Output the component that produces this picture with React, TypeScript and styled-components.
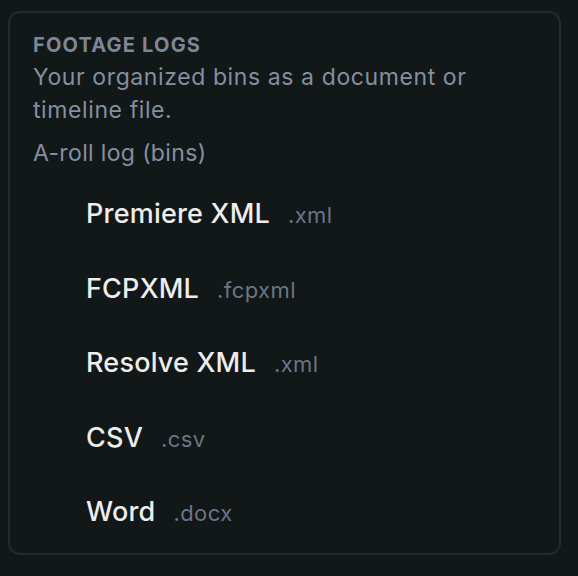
import React from "react";
import styled, { createGlobalStyle } from "styled-components";

const Global = createGlobalStyle`
  html, body { margin: 0; padding: 0; background: #121718; }
  body { font-family: Inter, "Noto Sans", sans-serif; -webkit-font-smoothing: antialiased; }
`;

const Page = styled.div`
  padding: 11px 17px 0 8px;
  width: 578px;
  height: 576px;
  box-sizing: border-box;
`;

const Card = styled.section`
  box-sizing: border-box;
  width: 553px;
  height: 544px;
  border: 2px solid #252a2c;
  border-radius: 12px;
  background: #121718;
  padding: 20px 23px 0 23px;
  display: flex;
  flex-direction: column;
`;

const Title = styled.h2`
  margin: 0;
  font-size: 20px;
  line-height: 24px;
  font-weight: 700;
  letter-spacing: 1.2px;
  color: #7d8797;
  text-transform: uppercase;
`;

const Desc = styled.p`
  margin: 4px 0 0;
  max-width: 460px;
  font-size: 23px;
  line-height: 33px;
  letter-spacing: 0.6px;
  color: #858fa0;
  font-weight: 400;
`;

const Sub = styled.div`
  margin-top: 10px;
  font-size: 23px;
  line-height: 33px;
  letter-spacing: 0.35px;
  color: #858fa0;
`;

const List = styled.ul`
  list-style: none;
  margin: 27px 0 0;
  padding: 0 0 0 53px;
  display: flex;
  flex-direction: column;
  gap: 40.5px;
`;

const Item = styled.li`
  display: flex;
  align-items: baseline;
  gap: 18px;
  height: 34px;
  line-height: 34px;
`;

const Name = styled.span`
  font-size: 27px;
  line-height: 34px;
  font-weight: 500;
  color: #ededed;
  letter-spacing: 0.2px;
`;

const Ext = styled.span`
  font-size: 22px;
  line-height: 34px;
  letter-spacing: 0.4px;
  color: #6b7585;
`;

const items = [
  ["Premiere XML", ".xml"],
  ["FCPXML", ".fcpxml"],
  ["Resolve XML", ".xml"],
  ["CSV", ".csv"],
  ["Word", ".docx"],
];

export default function App() {
  return (
    <>
      <Global />
      <Page>
        <Card>
          <Title>Footage Logs</Title>
          <Desc>Your organized bins as a document or timeline file.</Desc>
          <Sub>A-roll log (bins)</Sub>
          <List>
            {items.map(([n, e]) => (
              <Item key={n}>
                <Name>{n}</Name>
                <Ext>{e}</Ext>
              </Item>
            ))}
          </List>
        </Card>
      </Page>
    </>
  );
}
